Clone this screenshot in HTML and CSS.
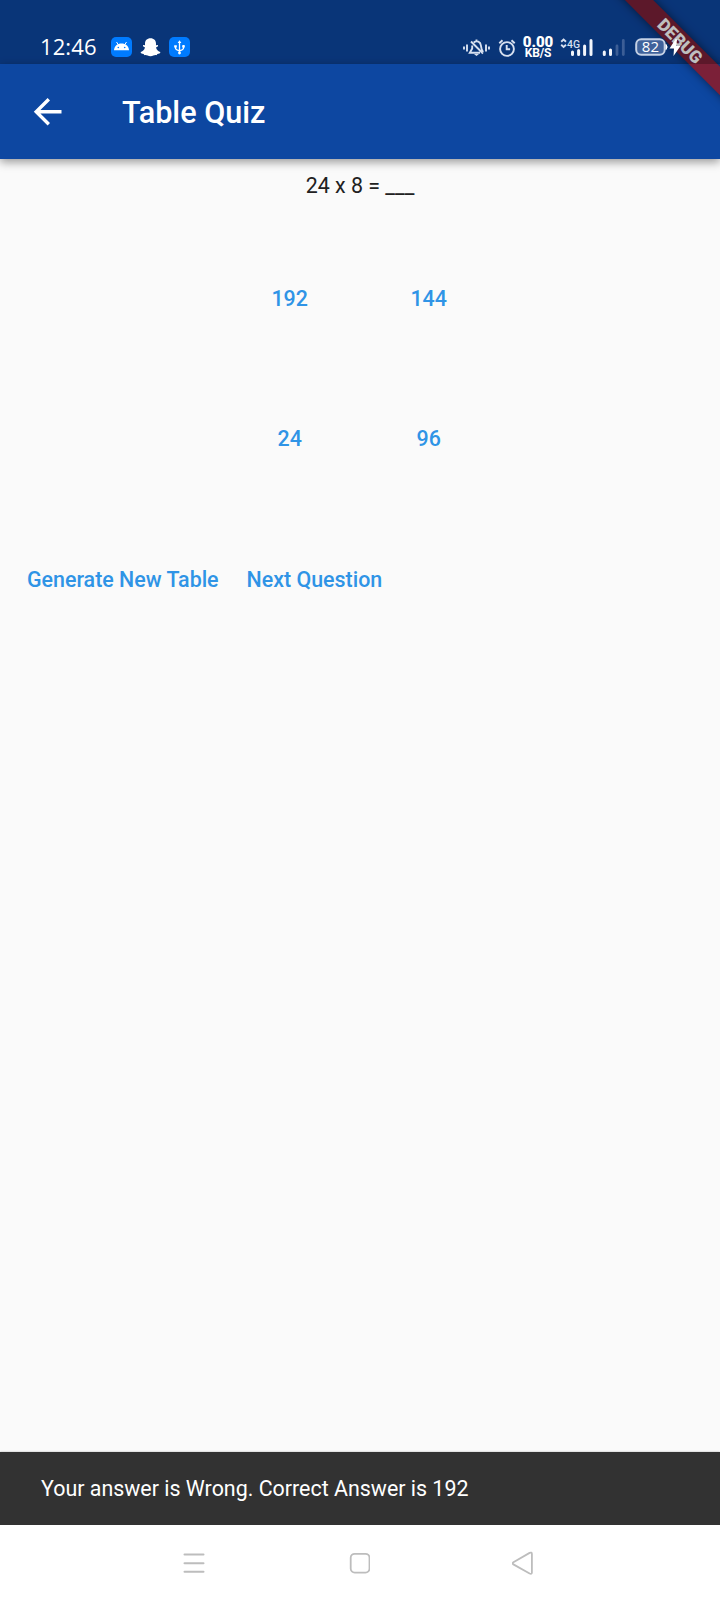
FILE: index.html
```html
<!DOCTYPE html>
<html lang="en">
<head>
<meta charset="utf-8">
<title>Table Quiz</title>
<link rel="stylesheet" href="styles.css">
</head>
<body>
<div class="screen">
  <div class="ribbon-clip"><div class="ribbon">DEBUG</div></div>
  <div class="status">
    <span class="clock">12:46</span>
    <svg class="notifications" width="80" height="22" viewBox="0 0 80 22">
      <rect x="0" y="1" width="21" height="20" rx="5" fill="#007bff"/>
      <path d="M3 14.300C3.300 10 6.300 7.500 10.500 7.500S17.700 10 18 14.300z" fill="#fff"/>
      <path d="M5.500 6l2 3M15.500 6l-2 3" stroke="#fff" stroke-width="1"/>
      <circle cx="7.300" cy="11.500" r=".8" fill="#007bff"/><circle cx="13.700" cy="11.500" r=".8" fill="#007bff"/>
      <path d="M39.500 2.200C36 2.200 34 4.500 34 7.500v1.700l-2-.2v1.300l2 1.200c-.6 2.500-2.500 4-4.400 4.600.2 1.700 1.500 1.600 3 1.800l.8 1.300c2-.7 3.400 1 6.100 1s4.100-1.700 6.100-1l.8-1.300c1.500-.2 2.800-.1 3-1.800-1.900-.6-3.800-2.100-4.400-4.600l2-1.200V9l-2 .2V7.500c0-3-2-5.300-5.500-5.300z" fill="#fff"/>
      <rect x="58" y="1" width="21" height="20" rx="5" fill="#007bff"/>
      <g stroke="#fff" stroke-width="1.300" fill="none"><path d="M68.500 6v11M64.500 10v2.200q0 1.300 4 2.600M72.500 9v3.200q0 1.300-4 2.600"/></g>
      <path d="M68.500 4.200l1.900 2.800h-3.800zM63.200 9.200h2.600v2.200h-2.600zM71.200 9.200h2.600v2.200h-2.600z" fill="#fff"/><circle cx="68.500" cy="17" r="1.400" fill="#fff"/>
    </svg>
    <svg class="alerts" width="54" height="22" viewBox="0 0 54 22" fill="none" stroke="#d7e0f0" stroke-width="1.900">
      <path d="M1 10.500v3M4 8.500v7M23 8.500v7M26 10.500v3" />
      <path d="M9.200 9.500v3L6.800 16.800H17M10.800 6.500c3-2.400 6.800-.7 7.100 3 .2 2.500.5 4 2.200 6.500M13.500 3.500v2M8 5.500L20 17.500"/>
      <path d="M11 18h5l-2.500 2z" fill="#d7e0f0" stroke="none"/>
      <circle cx="44" cy="13" r="6.900"/><path d="M43.700 9v4.300h3.400M36.300 7.200l3.200-3M51.700 7.200l-3.200-3"/>
    </svg>
    <span class="rate"><b>0.00</b><i>KB/S</i></span>
    <svg class="signals" width="66" height="24" viewBox="0 0 66 24">
      <path d="M1.200 5.800L3.600 3.600 6 5.800M1.200 8.800L3.600 11 6 8.800" fill="none" stroke="#d7e0f0" stroke-width="1.900"/>
      <text x="7" y="12" class="network" textLength="13" lengthAdjust="spacingAndGlyphs">4G</text>
      <path d="M12.500 16v2.500M18.600 14.500v4M24.600 10v8.500M31 4.500v14" stroke="#f2f5fb" stroke-width="3" stroke-linecap="round"/>
      <path d="M44.300 16v2.500M50.500 14v4.500" stroke="#f2f5fb" stroke-width="3" stroke-linecap="round"/>
      <path d="M57 10v8.500M63.300 4.500v14" stroke="#3c5e96" stroke-width="2.800" stroke-linecap="round"/>
    </svg>
    <svg class="battery" width="48" height="22" viewBox="0 0 48 22">
      <rect x="1.200" y="3.200" width="28.500" height="15.600" rx="5" fill="#3f629b" stroke="#c5d1e5" stroke-width="2"/>
      <path d="M31 8.500q2.200 2.500 0 5z" fill="#fff" stroke="#fff"/>
      <text x="15.400" y="16.200" class="percent">82</text>
      <path d="M41 2.500L34.500 12.500h4.500l-.5 7.500 7-10h-4.500l1-6z" fill="#fff"/>
    </svg>
  </div>
  <header class="appbar">
    <svg class="back" width="30" height="30" viewBox="0 0 30 30" fill="none" stroke="#fff" stroke-width="3.400"><path d="M28.500 14.700H3M15.800 2.200L3.200 14.700 15.800 27.200"/></svg>
    <h1>Table Quiz</h1>
  </header>
  <main class="content">
    <p class="question">24 x 8 = ___</p>
    <div class="answers">
      <button>192</button><button>144</button>
      <button>24</button><button>96</button>
    </div>
    <div class="actions"><button>Generate New Table</button><button>Next Question</button></div>
  </main>
  <div class="snackbar">Your answer is Wrong. Correct Answer is 192</div>
  <nav class="navbar">
    <svg width="22" height="24" viewBox="0 0 22 24" stroke="#bdbdbd" stroke-width="2"><path d="M1.500 3.500h19M1.500 12.200h19M1.500 20.700h19" stroke-linecap="round"/></svg>
    <svg width="22" height="24" viewBox="0 0 22 24" fill="none" stroke="#bdbdbd" stroke-width="1.800"><rect x="2.700" y="2.800" width="18.800" height="18.800" rx="4"/></svg>
    <svg width="22" height="24" viewBox="0 0 22 24" fill="none" stroke="#bdbdbd" stroke-width="1.800"><path d="M1.400 11.200L17.600 1.900q2.300-1 2.300 1v18.600q0 2-2.300 1L1.400 13.400q-1.500-1.100 0-2.200z"/></svg>
  </nav>
</div>
</body>
</html>
```
FILE: styles.css
```css
* { box-sizing: border-box; }
body { margin: 0; font-family: Roboto, sans-serif; }
.screen { position: relative; width: 720px; height: 1600px; display: flex; flex-direction: column; background: linear-gradient(#0d47a1 64px, #fafafa 64px); overflow: hidden; }
.status { position: relative; z-index: 3; height: 64px; padding: 36px 37px 0 40px; display: flex; align-items: flex-start; background: rgba(0,0,0,.25); color: #fff; flex: none; }
.clock { width: 71px; margin-top: -1px; font: 22px/22px "Open Sans", sans-serif; letter-spacing: .1px; }
.notifications { flex: none; }
.alerts { flex: none; margin-left: auto; }
.rate { width: 32px; margin: -1px 0 0 5px; display: flex; flex-direction: column; align-items: center; font-weight: 700; }
.rate b { font-size: 15px; line-height: 14px; }
.rate i { font-size: 12px; line-height: 9px; font-style: normal; letter-spacing: -.1px; }
.signals { flex: none; margin-left: 6px; }
.network { font: 500 11px Roboto, sans-serif; fill: #d7e0f0; }
.battery { flex: none; margin-left: 9px; }
.percent { font: 15px "Open Sans", sans-serif; fill: #fff; text-anchor: middle; }
.appbar { height: 95px; flex: none; display: flex; align-items: center; padding: 0 34px; background: #0d47a1; box-shadow: 0 3px 9px rgba(0,0,0,.4); color: #fff; }
.back { margin-left: -1px; }
h1 { margin: 2px 0 0 59px; font-size: 30.600px; line-height: 36px; font-weight: 500; }
.ribbon-clip { position: absolute; z-index: 2; top: 0; right: 0; width: 140px; height: 140px; overflow: hidden; }
.ribbon { position: absolute; left: 0; top: 31px; width: 200px; height: 20px; transform: rotate(45deg); background: #7b2038; box-shadow: 0 0 10px rgba(0,0,0,.5); color: #fff; font-size: 17.300px; font-weight: 900; line-height: 20px; text-align: center; }
.content { flex: 1; display: flex; flex-direction: column; }
.question { margin: 14px 0 0; font-size: 21.420px; line-height: 25px; text-align: center; color: #212121; }
.answers { margin: 30px 0 0 220.200px; display: grid; grid-template-columns: 139px 139px; grid-template-rows: 140px 140px; }
button { border: 0; padding: 0; background: none; font: 500 21.420px/25px Roboto, sans-serif; color: #2f94e6; }
.actions { margin: 59px 0 0 27px; height: 25px; display: flex; gap: 28px; }
.snackbar { height: 73px; flex: none; padding: 24px 41px; background: #323232; color: #fff; font-size: 21.420px; line-height: 25px; box-shadow: 0 0 2px rgba(0,0,0,.3); }
.navbar { position: relative; height: 75px; flex: none; padding: 26px 186px 0 183px; display: flex; justify-content: space-between; background: #fff; }
```
